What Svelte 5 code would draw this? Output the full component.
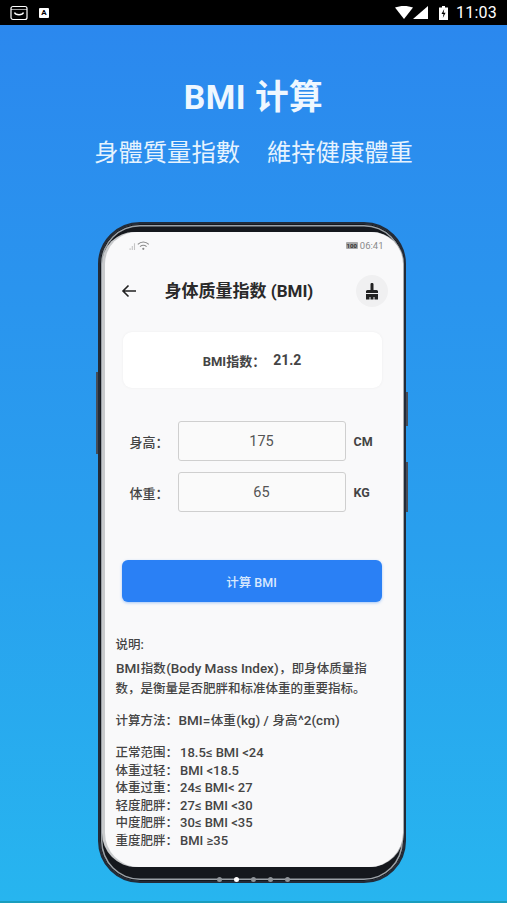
<script>
  const ranges = [
    ["正常范围", "18.5≤ BMI <24"],
    ["体重过轻", "BMI <18.5"],
    ["体重过重", "24≤ BMI< 27"],
    ["轻度肥胖", "27≤ BMI <30"],
    ["中度肥胖", "30≤ BMI <35"],
    ["重度肥胖", "BMI ≥35"],
  ];
  const fields = [
    { label: "身高", value: "175", unit: "CM" },
    { label: "体重", value: "65", unit: "KG" },
  ];
</script>

<div class="page">
  <header class="statusbar">
    <div class="status-left">
      <svg width="18" height="16" viewBox="0 0 18 16">
        <rect x="1" y="1.500" width="16" height="13" rx="2" fill="none" stroke="#fff" stroke-width="1.200" />
        <path d="M1 4.500h16" stroke="#fff" stroke-width="1" opacity="0.6" />
        <path d="M4.500 7.500c1 3 8 3 9 0" fill="none" stroke="#fff" stroke-width="1.300" />
      </svg>
      <span class="a-icon">A</span>
    </div>
    <div class="status-right">
      <svg width="18" height="13" viewBox="0 0 18 13"><path d="M0 1.600C5 -0.500 13 -0.500 18 1.600L9 13z" fill="#fff" /></svg>
      <svg width="15" height="13" viewBox="0 0 15 13"><path d="M15 0V13H0z" fill="#fff" /></svg>
      <svg class="battery" width="9" height="14" viewBox="0 0 9 14">
        <path d="M3 0h3v1.500h3V14H0V1.500h3z" fill="#fff" />
        <path d="M5.200 3L2.500 8h2L3.800 12 6.600 6.800h-2z" fill="#000" />
      </svg>
      <span class="clock">11:03</span>
    </div>
  </header>

  <main class="hero">
    <h1>BMI 计算</h1>
    <p class="subtitle"><span>身體質量指數</span><span>維持健康體重</span></p>

    <div class="phone">
      <span class="side-btn volume"></span>
      <span class="side-btn power-a"></span>
      <span class="side-btn power-b"></span>
      <div class="screen">
        <div class="phone-status">
          <div class="phone-signal">
            <svg width="22" height="11" viewBox="0 0 20 10">
              <path d="M1 9V7.500M3 9V5.500M5 9V3" stroke="#c4c4c4" stroke-width="1" />
              <path d="M8 4c3-3 7-3 10 0M10 6c2-1.600 4-1.600 6 0" fill="none" stroke="#8a8a8a" stroke-width="1" />
              <circle cx="13" cy="8" r="1" fill="#8a8a8a" />
            </svg>
          </div>
          <div class="phone-clock"><span class="mini-battery">100</span> 06:41</div>
        </div>

        <div class="appbar">
          <svg class="back" width="16" height="14" viewBox="0 0 16 14">
            <path d="M15 7H2M7.500 1.500L2 7l5.500 5.500" fill="none" stroke="#222" stroke-width="1.600" />
          </svg>
          <h2>身体质量指数 (BMI)</h2>
          <div class="broom">
            <svg width="14" height="17" viewBox="0 0 14 17">
              <path d="M5.500 1.200C5.500.5 6.100 0 7 0s1.500.5 1.500 1.200V7h3c1 0 1.500.8 1.500 1.600V10H1V8.600C1 7.800 1.500 7 2.500 7h3z" fill="#222" />
              <path d="M1 11h12v5.500H9.500V14H8.500v2.500h-3V14H4.500v2.500H1z" fill="#222" />
            </svg>
          </div>
        </div>

        <section class="result">
          <span>BMI指数：</span><span class="score">21.2</span>
        </section>

        <div class="fields">
          {#each fields as f}
            <div class="field">
              <label for={f.label}>{f.label}：</label>
              <input id={f.label} value={f.value} />
              <span class="unit">{f.unit}</span>
            </div>
          {/each}
        </div>

        <button class="calc">计算 BMI</button>

        <section class="notes">
          <p class="title">说明:</p>
          <p class="desc"><span class="en">BMI</span>指数<span class="en">(Body Mass Index)</span>，即身体质量指<br />数，是衡量是否肥胖和标准体重的重要指标。</p>
          <p class="formula">计算方法：<span class="en">BMI=</span>体重<span class="en">(kg) /</span> 身高<span class="en">^2(cm)</span></p>
          <ul>
            {#each ranges as [name, val]}
              <li>{name}：<span class="en val">{val}</span></li>
            {/each}
          </ul>
        </section>
      </div>
      <div class="dots">
        {#each [0, 1, 2, 3, 4] as i}
          <span class:on={i === 1}></span>
        {/each}
      </div>
    </div>
  </main>
</div>

<style>
  :global(body) {
    margin: 0;
    background: #000;
  }
  .page {
    width: 507px;
    height: 903px;
    overflow: hidden;
    display: flex;
    flex-direction: column;
    font-family: Roboto, "Noto Sans CJK SC", sans-serif;
  }
  .statusbar {
    height: 25px;
    flex-shrink: 0;
    background: #000;
    display: flex;
    align-items: center;
    justify-content: space-between;
    padding: 0 4px 0 10px;
    box-sizing: border-box;
  }
  .status-left {
    display: flex;
    align-items: center;
    gap: 11px;
  }
  .a-icon {
    width: 10px;
    height: 10px;
    background: #fff;
    color: #000;
    border-radius: 1px;
    font-size: 8px;
    font-weight: 700;
    line-height: 10px;
    text-align: center;
  }
  .status-right {
    display: flex;
    align-items: center;
    color: #fff;
  }
  .battery {
    margin-left: 11px;
  }
  .clock {
    font-size: 16px;
    margin-left: 8px;
    letter-spacing: 0.2px;
    width: 47px;
  }
  .hero {
    flex: 1;
    min-height: 0;
    background: linear-gradient(180deg, #2b88ee 0%, #29a0ee 60%, #27b5ef 100%);
    border-bottom: 2px solid #1a9dbd;
    display: flex;
    flex-direction: column;
    align-items: center;
    color: #fff;
  }
  h1 {
    margin: 53px 0 0;
    font-size: 33.700px;
    line-height: 40px;
    font-weight: 700;
    letter-spacing: 0.5px;
    color: #eef7ff;
  }
  .subtitle {
    margin: 19px 0 0;
    font-size: 24.300px;
    line-height: 32px;
    display: flex;
    gap: 27px;
    color: #e6f3fe;
  }
  .phone {
    position: relative;
    flex-shrink: 0;
    margin: 53px 0 0 -4px;
    width: 308px;
    height: 661px;
    box-sizing: border-box;
    padding: 8px 1px 14px 5px;
    border-radius: 42px;
    background: #15181d;
    border: 2px solid #222b38;
    box-shadow:
      inset 0 0 0 1px #15181d,
      inset 0 0 0 2.500px #9aa0a6;
  }
  .side-btn {
    position: absolute;
    width: 2px;
    background: #454c58;
  }
  .volume {
    left: -4px;
    top: 148px;
    height: 82px;
  }
  .power-a {
    right: -4px;
    top: 168px;
    height: 34px;
  }
  .power-b {
    right: -4px;
    top: 238px;
    height: 50px;
  }
  .screen {
    height: 100%;
    box-sizing: border-box;
    background: #f9f9fa;
    border-radius: 32px 32px 34px 34px;
    overflow: hidden;
    padding: 0 0 0 18px;
    color: #333;
    box-shadow:
      -3px 0 0 #c8cacc,
      1px 0 0 #a8abae;
  }
  .phone-status {
    height: 26px;
    display: flex;
    justify-content: space-between;
    align-items: center;
    margin-left: 6px;
    padding-right: 19px;
    font-size: 9.500px;
    color: #8a8a8a;
  }
  .phone-signal {
    display: flex;
  }
  .phone-clock {
    display: flex;
    align-items: center;
    gap: 2px;
  }
  .mini-battery {
    background: #a9a9a9;
    color: #333;
    font-size: 6px;
    font-weight: 700;
    line-height: 7px;
    border-radius: 1px;
    padding: 0 1px;
  }
  .appbar {
    height: 36px;
    margin-top: 15px;
    display: flex;
    align-items: center;
    margin-right: 16px;
  }
  .back {
    margin-left: -2px;
  }
  .appbar h2 {
    margin: 0 0 3px 28px;
    flex: 1;
    font-size: 17px;
    font-weight: 700;
    color: #2a2a2a;
  }
  .broom {
    width: 32px;
    height: 32px;
    margin-right: -1px;
    border-radius: 50%;
    background: #f0f0f1;
    display: flex;
    align-items: center;
    justify-content: center;
  }
  .result {
    width: 259px;
    height: 56px;
    margin-top: 23px;
    background: #fff;
    border-radius: 9px;
    box-shadow: 0 0 3px rgba(0, 0, 0, 0.05);
    display: flex;
    align-items: center;
    justify-content: center;
    font-size: 13px;
    font-weight: 700;
    color: #444;
  }
  .score {
    font-size: 14px;
    margin-left: 8px;
  }
  .fields {
    margin-top: 33px;
    display: flex;
    flex-direction: column;
    gap: 11px;
  }
  .field {
    display: flex;
    align-items: center;
    height: 40px;
  }
  .field label {
    width: 48px;
    margin-left: 7px;
    font-size: 13px;
    font-weight: 500;
    color: #444;
  }
  .field input {
    width: 168px;
    height: 40px;
    box-sizing: border-box;
    background: #fafafa;
    border: 1.500px solid #cfcfcf;
    border-radius: 3px;
    text-align: center;
    font: 400 14.500px Roboto, sans-serif;
    color: #555;
    outline: none;
    padding: 0;
  }
  .unit {
    margin-left: 8px;
    font-size: 12.500px;
    font-weight: 700;
    color: #444;
  }
  .calc {
    display: block;
    width: 260px;
    height: 42px;
    margin: 48px 0 0 -1px;
    border: none;
    border-radius: 6px;
    background: #2a80f5;
    color: #d9e9fd;
    font: 500 12.500px Roboto, "Noto Sans CJK SC", sans-serif;
    box-shadow: 0 1px 3px rgba(42, 128, 245, 0.4);
    padding: 0;
  }
  .notes {
    margin-top: 34px;
    margin-left: -7px;
    width: 266px;
    font-size: 12.500px;
    line-height: 17px;
    color: #444;
    font-weight: 500;
  }
  .notes p {
    margin: 0;
  }
  .notes .en {
    font-size: 13.500px;
    margin: 0 0.5px;
  }
  .notes .desc {
    margin-top: 4.500px;
    line-height: 20px;
  }
  .notes .formula {
    margin-top: 13.500px;
  }
  .notes ul {
    list-style: none;
    margin: 15px 0 0;
    padding: 0;
  }
  .notes li {
    height: 17.500px;
  }
  .notes .val {
    margin-left: 2px;
    font-size: 13px;
  }
  .dots {
    position: absolute;
    left: 117px;
    bottom: -1px;
    display: flex;
    gap: 12px;
  }
  .dots span {
    width: 5px;
    height: 5px;
    border-radius: 50%;
    background: #8f9499;
  }
  .dots span.on {
    background: #fff;
  }
</style>
